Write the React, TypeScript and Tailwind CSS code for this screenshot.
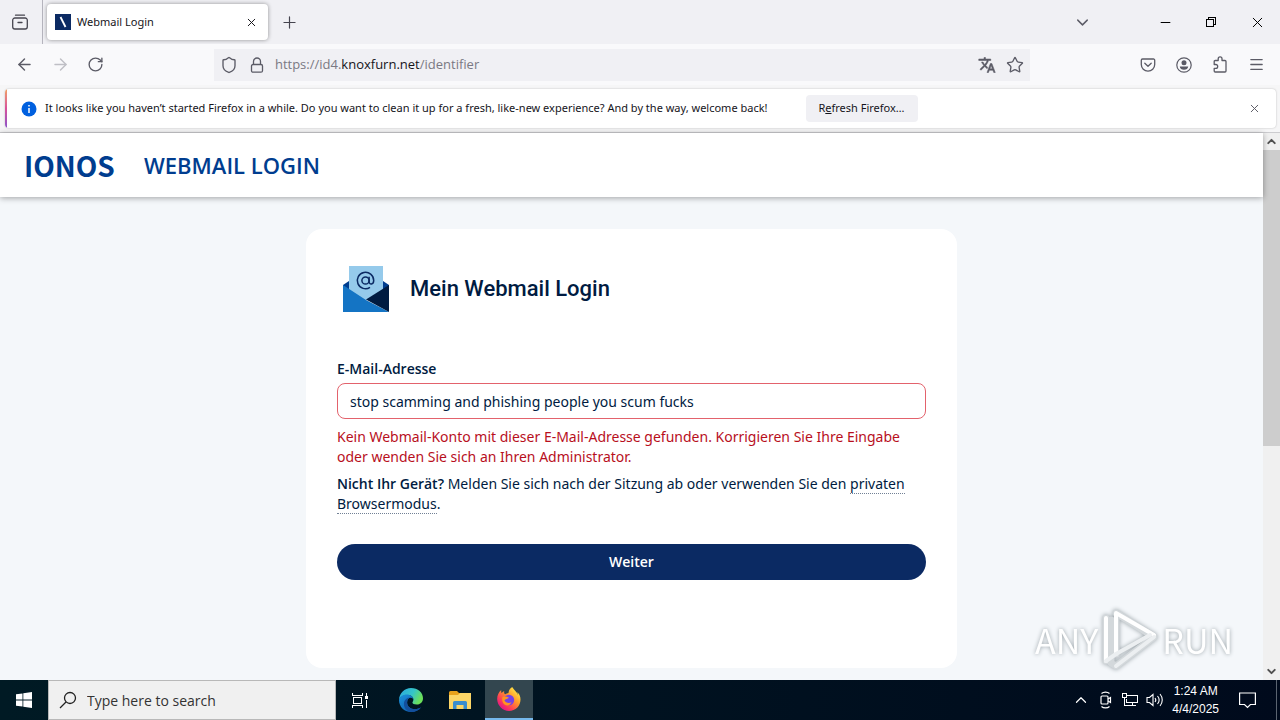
import React, { useState } from 'react';
import { ArrowLeft, ArrowRight, ChevronDown, ChevronUp, Menu, Minus, Plus, RotateCw, Shield, Star, X } from 'lucide-react';

const FirefoxViewIcon = () => (
  <svg viewBox="0 0 16 16" className="h-4 w-4" fill="none" stroke="currentColor" strokeWidth="1.300" strokeLinecap="round">
    <path d="M3.500 1.200h9M6 8.500h4" />
    <path d="M.7 6.200A2.200 2.200 0 0 1 2.900 4h10.200a2.200 2.200 0 0 1 2.200 2.200v6.600a2.200 2.200 0 0 1-2.200 2.200H2.900a2.200 2.200 0 0 1-2.200-2.200z" />
  </svg>
);

const LockIcon = () => (
  <svg viewBox="0 0 14 16" className="h-4 w-3.5" fill="none" stroke="currentColor" strokeWidth="1.300">
    <path d="M3.500 7.500v-3a3.500 3.500 0 0 1 7 0v3" />
    <rect x="1.500" y="7.500" width="11" height="7.700" rx="1.500" />
  </svg>
);

const TranslateIcon = () => (
  <svg viewBox="0 0 24 24" className="h-[18px] w-[18px]" fill="currentColor">
    <path d="M12.900 15.100l-2.600-2.500.1-.1c1.700-1.900 3-4.200 3.700-6.500H17V4h-7V2H8v2H1v2h11.200c-.7 1.900-1.700 3.800-3.200 5.400C8 10.300 7.300 9.200 6.700 8h-2c.7 1.600 1.700 3.200 3 4.600l-5.100 5L4 19l5-5 3.100 3.100.8-2zM18.500 10h-2L12 22h2l1.100-3h4.800l1.100 3h2l-4.500-12zm-2.600 7l1.600-4.300 1.600 4.300h-3.200z" stroke="currentColor" strokeWidth=".7" />
  </svg>
);

const PocketIcon = () => (
  <svg viewBox="0 0 16 16" className="h-4 w-4" fill="none" stroke="currentColor" strokeWidth="1.300" strokeLinecap="round" strokeLinejoin="round">
    <path d="M2.500 2h11a1.200 1.200 0 0 1 1.200 1.200V7.500a6.700 6.700 0 0 1-13.400 0V3.200A1.200 1.200 0 0 1 2.500 2z" />
    <path d="M4.800 6.200L8 9.300l3.200-3.100" />
  </svg>
);

const AccountIcon = () => (
  <svg viewBox="0 0 16 16" className="h-4 w-4">
    <circle cx="8" cy="8" r="7.200" fill="none" stroke="currentColor" strokeWidth="1.200" />
    <circle cx="8" cy="5.800" r="2.500" fill="currentColor" />
    <path d="M3.800 9.500h8.400c0 2-1.900 3.300-4.200 3.300s-4.200-1.300-4.200-3.300z" fill="currentColor" />
  </svg>
);

const ExtensionsIcon = () => (
  <svg viewBox="0 0 16 17" className="h-[17px] w-4" fill="none" stroke="currentColor" strokeWidth="1.300" strokeLinejoin="round">
    <path d="M2.200 5.500a1 1 0 0 1 1-1h3V2.800a1.900 1.900 0 0 1 3.800 0v1.700h3a1 1 0 0 1 1 1V15a1 1 0 0 1-1 1H3.200a1 1 0 0 1-1-1v-2.700h1.600a1.900 1.900 0 0 0 0-3.800H2.200z" />
  </svg>
);

const RestoreIcon = () => (
  <svg viewBox="0 0 10 10" className="h-[10px] w-[10px]" fill="none" stroke="currentColor" shapeRendering="crispEdges">
    <path d="M.5 2.500h7v7h-7zM2.500 2.500v-2h7v7h-2" />
  </svg>
);

const EnvelopeIcon = () => (
  <svg viewBox="0 0 46 46" className="h-[46px] w-[46px]">
    <path d="M0 19l6-4 17-5 17 5 6 4v10H0z" fill="#003d8f" />
    <path d="M6 0h34v34H6z" fill="#95caeb" />
    <path d="M0 19l23 15 23 12H0z" fill="#1474c4" />
    <path d="M46 19L23 33.500 46 46z" fill="#001b41" />
    <g fill="none" stroke="#0b2a63" strokeWidth="1.500">
      <circle cx="22.500" cy="14.500" r="3.600" />
      <path d="M26.100 10.800v5c0 3.200 4.600 3 4.600-1.300a8.200 8.200 0 1 0-3.700 6.900" />
    </g>
  </svg>
);

const WindowsIcon = () => (
  <svg viewBox="0 0 16 16" className="h-4 w-4" fill="#fff">
    <path d="M0 2.300l6.500-.9v6.200H0zM7.300 1.300L16 0v7.600H7.300zM0 8.400h6.500v6.200L0 13.700zM7.300 8.400H16V16l-8.700-1.300z" />
  </svg>
);

const SearchIcon = () => (
  <svg viewBox="0 0 18 18" className="h-[18px] w-[18px] shrink-0" fill="none" stroke="#222" strokeWidth="1.300">
    <circle cx="11" cy="7" r="5.500" />
    <path d="M7 11l-6 6" />
  </svg>
);

const TaskViewIcon = () => (
  <svg viewBox="0 0 17 17" className="h-[17px] w-[17px]" fill="none" stroke="#fff" shapeRendering="crispEdges">
    <path d="M.5 1v2.500h10V1M1.500 5.500h8v6h-8zM.5 16v-2.500h10V16M14.500 1v3M14.500 8v8" />
    <path d="M13 4h3v3h-3z" fill="#fff" stroke="none" />
  </svg>
);

const EdgeIcon = () => (
  <svg viewBox="0 0 24 24" className="h-6 w-6">
    <defs>
      <linearGradient id="edgeTop" x1="0" y1="0" x2="1" y2="0.400">
        <stop offset="0" stopColor="#2aa7e0" />
        <stop offset="0.600" stopColor="#35c5c8" />
        <stop offset="1" stopColor="#6be05a" />
      </linearGradient>
      <linearGradient id="edgeBottom" x1="0" y1="0" x2="1" y2="1">
        <stop offset="0" stopColor="#1c93dd" />
        <stop offset="1" stopColor="#0b4fa0" />
      </linearGradient>
    </defs>
    <path d="M0 12C.3 5 5.500 0 12 0c7 0 12 4.800 12 10.300 0 4-3 6.300-6.300 6.300-2.700 0-4.300-.9-4.300-2 0-.8 1-1.200 1-3C14.400 9 12 7 8.800 7 4.500 7 1 9 0 12z" fill="url(#edgeTop)" />
    <path d="M0 12c.8-3.300 4-5.500 7.800-5.500 3.500 0 6.600 2.300 6.600 5 0 0-.8-1.700-2.700-1.700-2 0-3.600 2-3.600 4.600 0 4 3.700 6.700 7.800 6.700 2.600 0 4.800-1 6-1.700C19.800 22.200 16.300 24 12 24 5 24 0 18.500 0 12z" fill="url(#edgeBottom)" />
    <path d="M8.100 14.400c0 4 3.700 6.700 7.800 6.700 2.600 0 4.800-1 6-1.700-2 2.800-5.600 4.600-9.900 4.600-5-1-7.500-5-7-9 .4-3 2.800-6 6.700-5.200-2 0-3.600 2-3.600 4.600z" fill="#134f9c" />
  </svg>
);

const FolderIcon = () => (
  <svg viewBox="0 0 22 18" className="h-[18px] w-[22px]">
    <path d="M0 1.500A1.500 1.500 0 0 1 1.500 0H8l2 2h12v4H0z" fill="#e8a21c" />
    <path d="M0 4h9l2-2h11v16H0z" fill="#fcd667" />
    <path d="M4 18v-6.500A1.500 1.500 0 0 1 5.500 10h11a1.500 1.500 0 0 1 1.500 1.500V18h-3.500v-4h-7v4z" fill="#3a8ed0" />
  </svg>
);

const FirefoxIcon = () => (
  <svg viewBox="0 0 24 24" className="h-6 w-6">
    <defs>
      <linearGradient id="foxBody" x1="0.900" y1="0.100" x2="0.200" y2="0.900">
        <stop offset="0" stopColor="#fff04a" />
        <stop offset="0.400" stopColor="#ff9a2a" />
        <stop offset="0.750" stopColor="#ff4055" />
        <stop offset="1" stopColor="#e31587" />
      </linearGradient>
    </defs>
    <path d="M22.600 8.200c-.5-1.300-1.600-2.600-2.400-3 .6 1.200.9 2.200 1 3C19.800 5 17.500 3.700 15.500.5L15.200 0c-3 1.700-3.600 4.600-3.700 6-1.300.1-2.500.6-3.300 1.300-1.200-.5-1.200-2.300-1-3.300-1.100.5-2 1.400-2.600 2-.5-.6-.4-2.500-.4-3-2.700 2-4.200 6-4 9.500C.5 18.700 5.600 24 12 24c6.500 0 11.500-5 11.500-11.500 0-1.500-.3-3-.9-4.300z" fill="url(#foxBody)" />
    <circle cx="12" cy="13" r="5.200" fill="#7542e5" />
    <path d="M5.500 10c2.500-1 4.500-.4 6.500.8-1.500 1.400-3.500 1-4.500 2.400 1 2.800 5 3.500 7 1.800-1 3.500-4.500 4.200-7 2.500-2-1.500-2.800-4.500-2-7.500z" fill="#ff9420" />
  </svg>
);

const CameraTrayIcon = () => (
  <svg viewBox="0 0 16 18" className="h-[18px] w-4" fill="none" stroke="#fff" strokeWidth="1.200">
    <path d="M3.500 2.500c2-1.800 6-1.800 8 0M3.500 15.500c2 1.800 6 1.800 8 0" />
    <rect x="3" y="5" width="7" height="8" rx="1" />
    <path d="M10 8l2.500-1.500v5L10 10" />
  </svg>
);

const NetworkTrayIcon = () => (
  <svg viewBox="0 0 16 14" className="h-[14px] w-4" fill="none" stroke="#fff" shapeRendering="crispEdges">
    <path d="M5 2.500h10.500v7H4.500V6M10.500 9.500v3M6 12.500h8M.5.500h4v4h-4zM2.500 4.500v8H6" />
  </svg>
);

const VolumeTrayIcon = () => (
  <svg viewBox="0 0 18 14" className="h-[14px] w-[18px]" fill="none" stroke="#fff" strokeWidth="1.100">
    <path d="M1 4.500h2.500L7 1.500v11l-3.500-3H1zM9 5c1 1.200 1 2.800 0 4M11.500 3c2 2.400 2 5.600 0 8M14 1c3 3.500 3 8.500 0 12" />
  </svg>
);

const ActionCenterIcon = () => (
  <svg viewBox="0 0 17 17" className="h-[17px] w-[17px]" fill="none" stroke="#fff" strokeWidth="1.200">
    <path d="M.6 1h15.800v11.500h-5L8.500 15.500l-3-3H.6z" />
  </svg>
);

const PlayLogo = () => (
  <svg viewBox="0 0 56 64" className="h-16 w-14" fill="none" strokeLinejoin="round" strokeLinecap="round">
    <path d="M4 10v43M14 5l38 24-38 29-5-3V12M14 12v34" stroke="#d3d8db" strokeWidth="7" />
    <path d="M4 10v43M14 46V5l38 22" stroke="#fff" strokeWidth="4" />
    <path d="M4 53l10-7 34-19M52 29L14 58" stroke="#eceff1" strokeWidth="4" />
  </svg>
);

const TabStrip = () => (
  <div className="flex h-11 items-center bg-[#f0f0f4] text-[#45444e]">
    <button aria-label="Firefox View" className="flex h-full w-[43px] items-center justify-center border-r border-[#b5b4bd] pr-0.5">
      <FirefoxViewIcon />
    </button>
    <div className="ml-1 flex h-9 w-[221px] items-center rounded bg-white px-2 text-[#15141a] shadow-[0_0_4px_rgba(0,0,0,0.4)]">
      <svg viewBox="0 0 16 16" className="h-4 w-4">
        <path d="M0 0h16v16H0z" fill="#0b2a63" />
        <path d="M5.500 3l5 10" stroke="#fff" strokeWidth="1.800" />
      </svg>
      <span className="ml-1.5 flex-1 font-['Noto_Sans'] text-[11px]">Webmail Login</span>
      <button aria-label="Close tab" className="p-0.5"><X size={13} strokeWidth={1.8} /></button>
    </div>
    <button aria-label="New tab" className="ml-3"><Plus size={19} strokeWidth={1.5} /></button>
    <div className="ml-auto flex items-center text-black">
      <button aria-label="List all tabs" className="mr-[66px] text-[#5b5b66]"><ChevronDown size={19} strokeWidth={1.8} /></button>
      <button aria-label="Minimize" className="mr-[33px]"><Minus size={15} strokeWidth={1.8} /></button>
      <button aria-label="Restore" className="mr-[33px]"><RestoreIcon /></button>
      <button aria-label="Close" className="mr-3.5"><X size={17} strokeWidth={1.4} /></button>
    </div>
  </div>
);

const Toolbar = () => (
  <div className="flex h-[41px] items-center bg-[#f9f9fb] px-[15px] text-[#5b5b66]">
    <div className="flex flex-[11] items-center gap-[17px]">
      <button aria-label="Back"><ArrowLeft size={19} strokeWidth={1.8} /></button>
      <button aria-label="Forward" className="text-[#bfbfc5]"><ArrowRight size={19} strokeWidth={1.8} /></button>
      <button aria-label="Reload"><RotateCw size={17} strokeWidth={1.9} /></button>
    </div>
    <div className="flex h-8 w-full max-w-[816px] items-center bg-[#f0f0f4] px-1.5">
      <Shield size={18} strokeWidth={1.8} />
      <span className="ml-3"><LockIcon /></span>
      <div className="ml-[11px] flex-1 text-[13px] text-[#7a7983]">
        https://id4.<span className="text-[#15141a]">knoxfurn.net</span>/identifier
      </div>
      <button aria-label="Translate" className="mr-2.5"><TranslateIcon /></button>
      <button aria-label="Bookmark"><Star size={18} strokeWidth={1.8} /></button>
    </div>
    <div className="flex flex-[13] items-center justify-end gap-5">
      <button aria-label="Pocket"><PocketIcon /></button>
      <button aria-label="Account"><AccountIcon /></button>
      <button aria-label="Extensions"><ExtensionsIcon /></button>
      <button aria-label="Menu"><Menu size={17} strokeWidth={1.8} /></button>
    </div>
  </div>
);

const Notification = () => (
  <div className="border-b border-[#cccccf] bg-[#f6f6f7] py-1 pr-1 pl-[5px]">
    <div className="flex h-[39px] overflow-hidden rounded bg-white font-['Noto_Sans'] text-[11px] text-[#15141a] shadow-[0_0_2px_rgba(0,0,0,0.25)]">
      <div className="w-0.5 bg-linear-to-b from-[#f0a05f] via-[#d8509a] to-[#8b50c8]" />
      <div className="flex flex-1 items-center pl-3.5">
        <svg viewBox="0 0 16 16" className="h-4 w-4">
          <circle cx="8" cy="8" r="7.500" fill="#0060df" />
          <path d="M8 7v5M8 4v1.500" stroke="#fff" strokeWidth="1.500" />
        </svg>
        <span className="ml-2">It looks like you haven’t started Firefox in a while. Do you want to clean it up for a fresh, like-new experience? And by the way, welcome back!</span>
        <button className="ml-[38px] h-[27px] w-28 rounded bg-[#f0f0f4]">R<u>e</u>fresh Firefox…</button>
      </div>
      <button aria-label="Dismiss" className="mr-[15px] text-[#5b5b66]"><X size={13} strokeWidth={1.8} /></button>
    </div>
  </div>
);

const LoginCard = () => {
  const [email, setEmail] = useState('stop scamming and phishing people you scum fucks');

  return (
    <div className="mx-auto min-h-[439px] w-full max-w-[651px] rounded-2xl bg-white px-[31px] pt-[37px] font-['Noto_Sans'] text-[14px] leading-5 text-[#001b41]">
      <div className="flex items-center gap-[21px] pl-1.5">
        <EnvelopeIcon />
        <h2 className="font-[Roboto] text-[22px] font-medium">Mein Webmail Login</h2>
      </div>
      <label htmlFor="email" className="mt-[47px] block font-['Open_Sans'] font-semibold">E-Mail-Adresse</label>
      <input
        id="email"
        type="text"
        value={email}
        onChange={e => setEmail(e.target.value)}
        className="mt-1 block h-9 w-full rounded-lg border border-[#e3626c] px-3 outline-none"
      />
      <p className="mt-2 text-[#b80f1d]">
        Kein Webmail-Konto mit dieser E-Mail-Adresse gefunden. Korrigieren Sie Ihre Eingabe oder wenden Sie sich an Ihren Administrator.
      </p>
      <p className="mt-[7px]">
        <b className="font-['Open_Sans'] font-semibold">Nicht Ihr Gerät?</b> Melden Sie sich nach der Sitzung ab oder verwenden Sie den{' '}
        <a href="#" className="border-b border-dotted border-[#718095]">privaten Browsermodus</a>.
      </p>
      <button className="mt-[30px] h-9 w-full rounded-full bg-[#0b2a63] font-['Open_Sans'] font-semibold text-white">Weiter</button>
    </div>
  );
};

const Watermark = () => (
  <div aria-hidden="true" className="absolute right-[30px] bottom-2 flex items-center gap-1 font-['Noto_Sans_CJK_JP',sans-serif] text-[34px] leading-none text-white drop-shadow-[0_0_2px_#9aa3a8]">
    <span>ANY</span>
    <PlayLogo />
    <span>RUN</span>
  </div>
);

const Scrollbar = () => (
  <div className="flex w-[17px] flex-col items-center bg-[#f0f0f0] text-[#505050]">
    <div className="flex h-[17px] items-center"><ChevronUp size={13} strokeWidth={3.5} /></div>
    <div className="h-[296px] w-full bg-[#cdcdcd]" />
    <div className="mt-auto flex h-[17px] items-center"><ChevronDown size={13} strokeWidth={3.5} /></div>
  </div>
);

const Taskbar = () => (
  <footer className="flex h-10 items-center bg-linear-to-r from-[#001a24] to-[#000a1c] text-white">
    <button aria-label="Start" className="flex h-full w-12 items-center justify-center"><WindowsIcon /></button>
    <div className="flex h-full w-72 items-center border border-[#b8b8b8] bg-[#f0f0f0] px-2.5 text-black">
      <SearchIcon />
      <input aria-label="Search" placeholder="Type here to search" className="ml-2.5 w-full text-[14px] outline-none placeholder:text-[#333]" />
    </div>
    <button aria-label="Task View" className="flex w-12 justify-center"><TaskViewIcon /></button>
    <button aria-label="Edge" className="flex w-[54px] justify-center"><EdgeIcon /></button>
    <button aria-label="File Explorer" className="flex w-[47px] justify-center pr-1"><FolderIcon /></button>
    <button aria-label="Firefox" className="flex h-full w-12 items-center justify-center border-b-2 border-[#76b9ed] bg-[#33464f]"><FirefoxIcon /></button>
    <div className="ml-auto flex h-full items-center">
      <ChevronUp size={18} strokeWidth={1.6} />
      <div className="ml-2 flex items-center gap-2">
        <CameraTrayIcon />
        <NetworkTrayIcon />
        <VolumeTrayIcon />
      </div>
      <div className="ml-2 text-center font-['Liberation_Sans'] text-[12px] leading-[18px]">
        <div>1:24 AM</div>
        <div>4/4/2025</div>
      </div>
      <button aria-label="Notifications" className="ml-5"><ActionCenterIcon /></button>
      <div className="ml-5 h-full w-1 border-l border-[#5b6470]" />
    </div>
  </footer>
);

const App: React.FC = () => {
  return (
    <div className="flex min-h-screen flex-col font-['Open_Sans',sans-serif]">
      <TabStrip />
      <Toolbar />
      <Notification />
      <div className="flex flex-1">
        <main className="relative flex-1 bg-[#f4f7fa]">
          <header className="flex h-16 items-center bg-white pl-6 text-[#003d8f] shadow-[0_1px_6px_rgba(0,0,0,0.35)]">
            <span className="w-[92px] font-['Noto_Sans_CJK_JP',sans-serif] text-[28px] leading-none font-bold">IONOS</span>
            <h1 className="ml-7 text-[22px] font-semibold">WEBMAIL LOGIN</h1>
          </header>
          <div className="pt-8 pb-3">
            <LoginCard />
          </div>
          <Watermark />
        </main>
        <Scrollbar />
      </div>
      <Taskbar />
    </div>
  );
};

export default App;
